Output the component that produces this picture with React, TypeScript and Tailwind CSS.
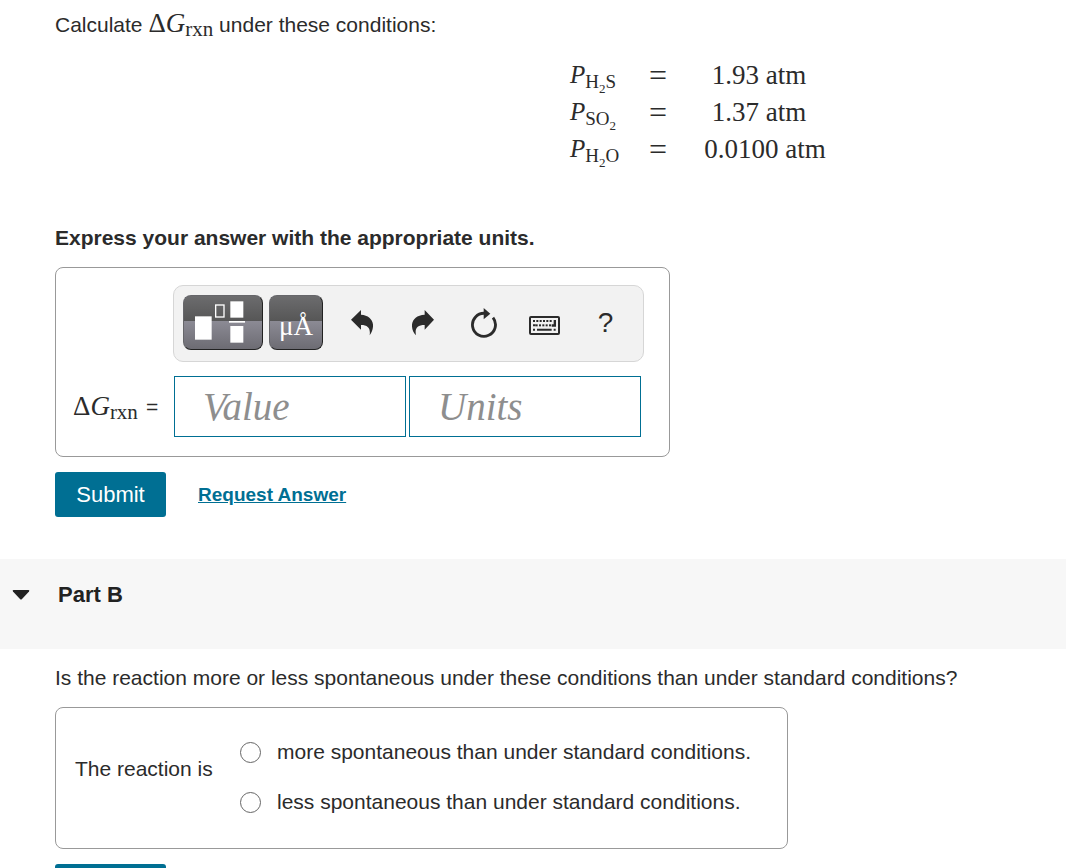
import type { ReactNode } from 'react'

const pressures = [
  { name: <>H<Sub2 />S</>, value: '1.93', pad: 'pr-3' },
  { name: <>SO<Sub2 /></>, value: '1.37', pad: 'pr-3' },
  { name: <>H<Sub2 />O</>, value: '0.0100', pad: 'pr-0' },
]

const choices = [
  { id: 'more', text: 'more spontaneous than under standard conditions.' },
  { id: 'less', text: 'less spontaneous than under standard conditions.' },
]

function Sub2() {
  return <sub className="text-[13px] bottom-[-5px]">2</sub>
}

function DeltaG() {
  return (
    <span className="font-['Liberation_Serif',serif] text-[27px] leading-none">
      Δ<i>G</i>
      <sub className="text-[21px] bottom-[-4px]">rxn</sub>
    </span>
  )
}

function UndoIcon() {
  return (
    <svg width="22" height="26" viewBox="0 0 66 78" fill="#2b2b2b">
      <path d="M0 29 30 0V14C54 15 68 32 66 50 65 61 61 69 56 76 59 55 51 45 30 45V59Z" />
    </svg>
  )
}

function RedoIcon() {
  return (
    <svg width="22" height="26" viewBox="0 0 66 78" fill="#2b2b2b">
      <path d="M66 29 38 0V14C12 15-2 32 0 50 1 61 5 69 12 76 8 55 15 45 38 45V59Z" />
    </svg>
  )
}

function ResetIcon() {
  return (
    <svg width="26" height="30" viewBox="0 0 78 90">
      <path d="M42 16A34.500 34.500 0 1 0 66 29" fill="none" stroke="#2b2b2b" strokeWidth="8.500" />
      <path d="M38 0 58 17 38 34Z" fill="#2b2b2b" />
    </svg>
  )
}

function KeyboardIcon() {
  return (
    <svg className="mt-[6px]" width="31" height="19" viewBox="0 0 93 57" fill="#2b2b2b">
      <rect x="3" y="3" width="87" height="51" rx="3" fill="none" stroke="#2b2b2b" strokeWidth="6" />
      {[12, 22, 32, 42, 52, 62].map((x) => (
        <rect key={x} x={x} y="12" width="6" height="6" />
      ))}
      {[20, 30, 40, 50, 60].map((x) => (
        <rect key={x} x={x} y="25" width="6" height="6" />
      ))}
      <path d="M74 12H81V32H68V25H74ZM12 25H20V31H12ZM12 38H18V44H12ZM24 38H68V44H24ZM74 38H80V44H74Z" />
    </svg>
  )
}

function TemplatesIcon() {
  return (
    <svg width="50" height="42" viewBox="0 0 150 126" fill="#fff">
      <rect x="0" y="46" width="50" height="70" />
      <rect x="62" y="12" width="25" height="36" fill="none" stroke="#fff" strokeWidth="4" />
      <rect x="106" y="1" width="39" height="49" />
      <rect x="102" y="60" width="48" height="5" />
      <rect x="106" y="75" width="39" height="50" />
    </svg>
  )
}

function DarkButton({ label, className, children }: { label: string; className: string; children: ReactNode }) {
  return (
    <button
      type="button"
      aria-label={label}
      className={`${className} flex h-[55px] shrink-0 justify-center rounded-lg border border-r-[#222] border-b-[#222] border-[#66666a] bg-[linear-gradient(#6c6c6e_0%,#565656_48%,#8b8a94_48%,#6d6c73_100%)]`}
    >
      {children}
    </button>
  )
}

function ToolButton({ label, children }: { label: string; children: ReactNode }) {
  return (
    <button type="button" aria-label={label} className="flex h-[55px] w-[61px] shrink-0 items-center justify-center">
      {children}
    </button>
  )
}

function SubmitButton() {
  return (
    <button type="button" className="h-[45px] w-[111px] rounded-[3px] bg-[#006f93] text-[22px] text-white">
      Submit
    </button>
  )
}

export default function App() {
  return (
    <main className="min-h-screen bg-white font-['Liberation_Sans',Arial,sans-serif] text-[21px] leading-6 text-[#2b2b2b]">
      <section className="px-[55px] pt-[9px]">
        <p className="h-8 leading-8">
          Calculate <DeltaG /> under these conditions:
        </p>

        <table className="mt-[15px] ml-[515px] font-['Liberation_Serif',serif] text-[25px] leading-9">
          <tbody>
            {pressures.map((p) => (
              <tr key={p.value} className="h-[37px]">
                <td className="w-[68px] p-0 whitespace-nowrap">
                  <i>P</i>
                  <sub className="text-[19px] bottom-[-5px]">{p.name}</sub>
                </td>
                <td className="w-10 p-0 text-center text-[32px]">=</td>
                <td className={`${p.pad} w-[174px] text-center text-[27px]`}>{p.value} atm</td>
              </tr>
            ))}
          </tbody>
        </table>

        <p className="mt-[59px] font-bold">Express your answer with the appropriate units.</p>

        <div className="mt-[17px] w-full max-w-[615px] rounded-lg border border-[#999] pt-[17px] pb-[19px] pl-[117px]">
          <div className="flex h-[77px] w-[471px] items-start rounded-[10px] border border-[#d6d6d6] bg-[#f2f2f2] pt-[9px] pl-[9px]">
            <DarkButton label="Templates" className="mr-[6px] w-20 pt-[5px] pr-[6px]">
              <TemplatesIcon />
            </DarkButton>
            <DarkButton label="Symbols" className="mr-2 w-[54px] pt-[17px]">
              <span className="font-['Liberation_Serif',serif] text-[27px] leading-none text-white">μÅ</span>
            </DarkButton>
            <ToolButton label="Undo"><UndoIcon /></ToolButton>
            <ToolButton label="Redo"><RedoIcon /></ToolButton>
            <ToolButton label="Reset"><ResetIcon /></ToolButton>
            <ToolButton label="Keyboard shortcuts"><KeyboardIcon /></ToolButton>
            <ToolButton label="Help"><span className="text-[28px]">?</span></ToolButton>
          </div>
          <div className="-ml-[100px] mt-[14px] flex items-center gap-[3px]">
            <label htmlFor="value" className="flex w-[98px] items-center gap-2 whitespace-nowrap">
              <DeltaG />
              <span>=</span>
            </label>
            <input
              id="value"
              placeholder="Value"
              className="h-[61px] w-[232px] border border-[#006f93] px-7 font-['Liberation_Serif',serif] text-[39px] italic placeholder:text-[#8e8e8e]"
            />
            <input
              aria-label="Units"
              placeholder="Units"
              className="h-[61px] w-[232px] border border-[#006f93] px-7 font-['Liberation_Serif',serif] text-[39px] italic placeholder:text-[#8e8e8e]"
            />
          </div>
        </div>

        <div className="mt-[15px] flex items-center gap-8">
          <SubmitButton />
          <a href="#" className="text-[19px] font-bold text-[#006f93] underline">Request Answer</a>
        </div>
      </section>

      <header className="mt-[42px] h-[90px] bg-[#f7f7f7] pt-6">
        <button type="button" aria-expanded="true" className="flex items-center text-[22px] font-bold text-[#222]">
          <svg className="mr-7 ml-3" width="18" height="10" viewBox="0 0 18 10" fill="#222">
            <path d="M1.500 0H16.500Q18 0 17 1.500L10 9Q9 10 8 9L1 1.500Q0 0 1.500 0Z" />
          </svg>
          Part B
        </button>
      </header>

      <section className="px-[55px] pt-[17px]">
        <p>Is the reaction more or less spontaneous under these conditions than under standard conditions?</p>
        <fieldset
          aria-labelledby="reaction"
          className="mt-[17px] flex h-[142px] w-full max-w-[733px] items-center rounded-lg border border-[#999] px-[19px] pb-[18px]"
        >
          <span id="reaction" className="w-[165px]">The reaction is</span>
          <div className="flex flex-col gap-[26px] pt-4">
            {choices.map((c) => (
              <label key={c.id} className="flex items-center gap-4 whitespace-nowrap">
                <input
                  type="radio"
                  name="reaction"
                  value={c.id}
                  className="size-[21px] shrink-0 appearance-none rounded-full border border-[#666] checked:border-[6px]"
                />
                {c.text}
              </label>
            ))}
          </div>
        </fieldset>
        <div className="mt-[15px]">
          <SubmitButton />
        </div>
      </section>
    </main>
  )
}
